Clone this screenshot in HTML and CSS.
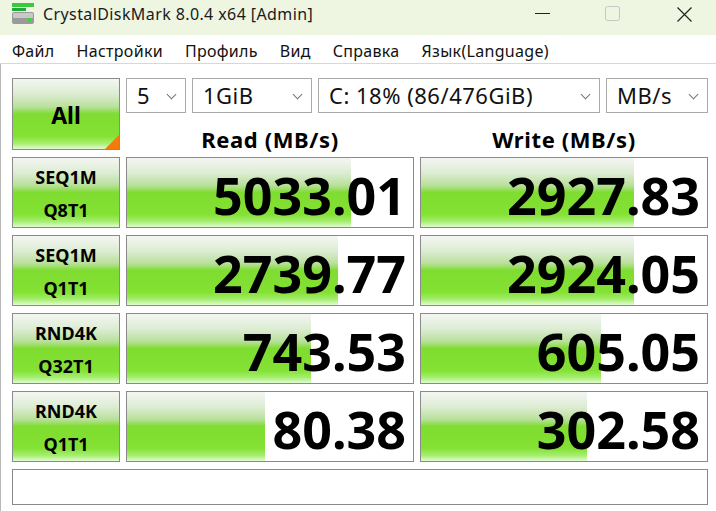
FILE: index.html
```html
<!doctype html>
<html lang="ru">
<head>
	<meta charset="UTF-8">
	<title>CrystalDiskMark 8.0.4 x64 [Admin]</title>
	<link rel="stylesheet" href="styles.css">
</head>
<body>
	<div class="window">
		<div class="titlebar">
			<svg class="app-icon" width="24" height="24" viewBox="0 0 24 24">
				<rect x="2" y="1" width="22" height="4" fill="#3cc83c"/>
				<rect x="2" y="6" width="14" height="3" fill="#22a838"/>
				<rect x="2" y="10" width="22" height="12" rx="2" fill="#9a9a9a"/>
				<rect x="3" y="11" width="20" height="5" rx="1" fill="#c8c8c8"/>
				<rect x="18" y="16" width="3" height="3" fill="#3fd040"/>
			</svg>
			<span class="title">CrystalDiskMark 8.0.4 x64 [Admin]</span>
			<div class="controls">
				<svg class="btn-min" width="16" height="16" viewBox="0 0 16 16"><line x1="0" y1="7.5" x2="15" y2="7.5" stroke="#222" stroke-width="1"/></svg>
				<svg class="btn-max" width="16" height="16" viewBox="0 0 16 16"><rect x="0.5" y="0.5" width="14" height="14" rx="2" fill="none" stroke="#c4c8c0" stroke-width="1"/></svg>
				<svg class="btn-close" width="16" height="16" viewBox="0 0 16 16"><path d="M0.5 1.5 L14.5 15.5 M14.5 1.5 L0.5 15.5" stroke="#222" stroke-width="1.2"/></svg>
			</div>
		</div>
		<ul class="menu">
			<li>Файл</li>
			<li>Настройки</li>
			<li>Профиль</li>
			<li>Вид</li>
			<li>Справка</li>
			<li>Язык(Language)</li>
		</ul>
		<div class="main">
			<div class="grid">
				<div class="all">All<span class="corner"></span></div>
				<div class="top">
					<div class="selects">
						<div class="combo c-count">5</div>
						<div class="combo c-size">1GiB</div>
						<div class="combo c-drive">C: 18% (86/476GiB)</div>
						<div class="combo c-unit">MB/s</div>
					</div>
					<div class="heads">
						<div>Read (MB/s)</div>
						<div>Write (MB/s)</div>
					</div>
				</div>

				<div class="label">SEQ1M<br>Q8T1</div>
				<div class="cell"><span class="bar" style="width:224px"></span><span class="val">5033.01</span></div>
				<div class="cell"><span class="bar" style="width:213px"></span><span class="val">2927.83</span></div>

				<div class="label">SEQ1M<br>Q1T1</div>
				<div class="cell"><span class="bar" style="width:211px"></span><span class="val">2739.77</span></div>
				<div class="cell"><span class="bar" style="width:213px"></span><span class="val">2924.05</span></div>

				<div class="label">RND4K<br>Q32T1</div>
				<div class="cell"><span class="bar" style="width:184px"></span><span class="val">743.53</span></div>
				<div class="cell"><span class="bar" style="width:180px"></span><span class="val">605.05</span></div>

				<div class="label">RND4K<br>Q1T1</div>
				<div class="cell"><span class="bar" style="width:138px"></span><span class="val">80.38</span></div>
				<div class="cell"><span class="bar" style="width:166px"></span><span class="val">302.58</span></div>
			</div>
			<div class="status"></div>
		</div>
	</div>
</body>
</html>
```

FILE: styles.css
```css
*{padding: 0; margin: 0; list-style: none; box-sizing: border-box;}
body{
	width: 716px; height: 511px; overflow: hidden; background: #fff;
	font-family: "Noto Sans", "Open Sans", sans-serif; color: #000;
}
.window{height: 511px; display: flex; flex-direction: column;}

.titlebar{
	height: 35px; background: #eef6e2; display: flex; align-items: flex-start;
	padding-top: 2px; flex-shrink: 0;
}
.app-icon{margin-left: 10px; margin-right: 9px; flex-shrink: 0;}
.title{font-size: 16px; letter-spacing: 0.4px; line-height: 24px; color: #1a1a1a;}
.controls{margin-left: auto; display: flex; padding-top: 4px; margin-right: 23px;}
.controls svg{display: block;}
.btn-max{margin-left: 54px;}
.btn-close{margin-left: 56px;}

.menu{
	height: 29px; display: flex; align-items: center; gap: 22px;
	padding: 3px 0 0 12px; border-bottom: 1px solid #d8d8d8; flex-shrink: 0;
	font-size: 16px; letter-spacing: 0.3px; color: #111;
}

.main{
	flex: 1; padding: 14px 0 0 12px; border-left: 1px solid #b8b8b8;
	background: #fff;
}
.main .grid{margin-left: -1px;}
.grid{
	display: grid; grid-template-columns: 108px 288px 288px;
	grid-template-rows: 72px repeat(4, 71px);
	column-gap: 6px; row-gap: 7px;
}

.all, .label, .cell{
	border: 1px solid #8a8a8a;
}
.all, .label, .bar{
	background: linear-gradient(to bottom, #f4f6f2 0%, #dcecd2 22%, #b8e09a 40%, #7fdc30 50%, #84e234 82%, #a6ee70 92%, #e2fbd2 100%);
}
.all{
	position: relative; display: flex; align-items: center; justify-content: center;
	font-weight: bold; font-size: 23px; padding-top: 2px;
}
.corner{
	position: absolute; right: 0; bottom: 0; width: 0; height: 0;
	border-left: 14px solid transparent; border-bottom: 14px solid #f57a0a;
}

.top{grid-column: 2 / 4; display: flex; flex-direction: column;}
.selects{display: flex; gap: 6px; height: 35px;}
.combo{
	position: relative; border: 1px solid #aaa; background: #fff;
	font-size: 22px; letter-spacing: 0.5px; line-height: 33px; padding-left: 10px; color: #111;
}
.combo:after{
	content: ""; position: absolute; right: 10px; top: 12px;
	width: 6px; height: 6px; border-right: 1px solid #777; border-bottom: 1px solid #777;
	transform: rotate(45deg);
}
.c-count{width: 60px;}
.c-size{width: 120px;}
.c-drive{width: 282px;}
.c-unit{width: 102px;}

.heads{
	flex: 1; display: grid; grid-template-columns: 288px 288px; column-gap: 6px;
	align-items: end;
}
.heads div{text-align: center; font-weight: bold; font-size: 22px; letter-spacing: 0.6px; line-height: 22px;}

.label{
	display: flex; align-items: center; justify-content: center; text-align: center;
	font-weight: bold; font-size: 18px; line-height: 33px; padding-top: 2px;
}

.cell{position: relative; background: #fff; display: flex; align-items: center; justify-content: flex-end;}
.bar{position: absolute; left: 0; top: 0; bottom: 0;}
.val{
	position: relative; font-weight: bold; font-size: 52px; line-height: 60px;
	padding-right: 7px; padding-top: 4px;
}

.status{
	width: 696px; height: 36px; margin-top: 7px; margin-left: -1px;
	border: 1px solid #8a8a8a; background: #fff;
}
```
